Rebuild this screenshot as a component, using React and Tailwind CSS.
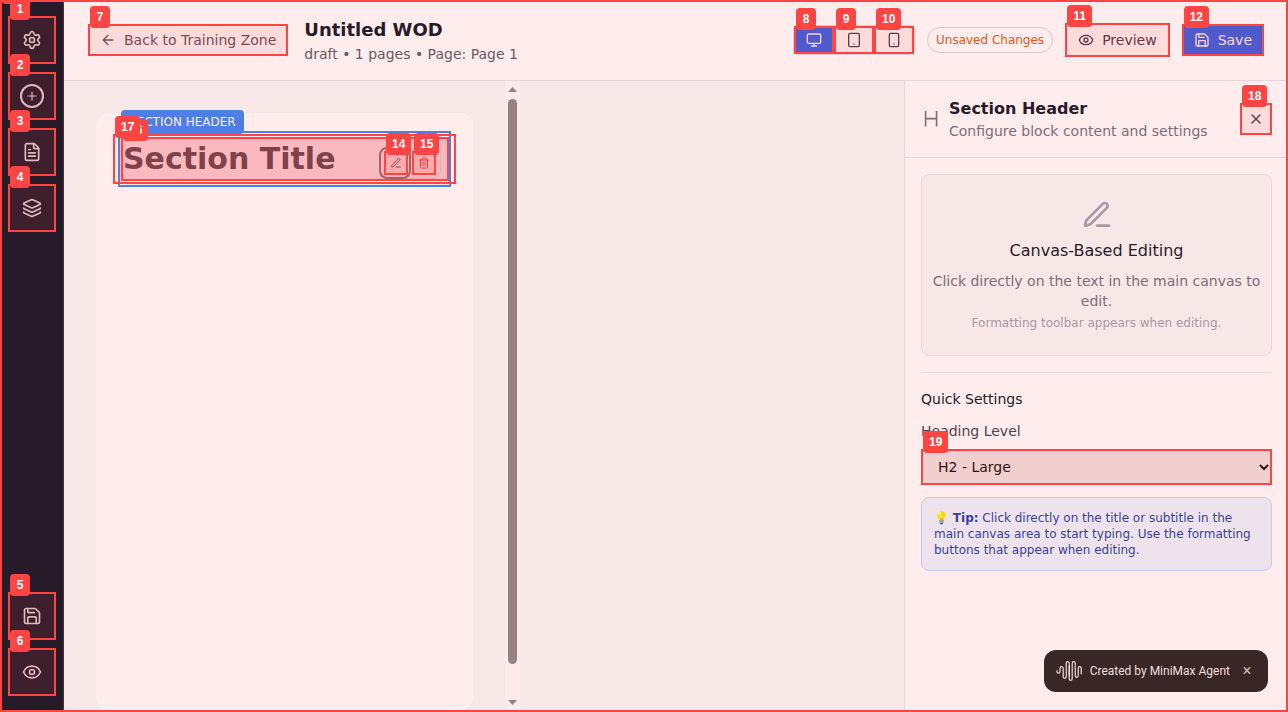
import React from "react";
import {
  ArrowLeft,
  Eye,
  FileText,
  Layers,
  Monitor,
  Save,
  Settings,
  Smartphone,
  Tablet,
  Trash2,
  X,
} from "lucide-react";

/* Numbered frame laid over an interactive element. */
function Marker({ n, place = "inset-0", tint = "bg-[#ff4444]/10" }) {
  return (
    <span className={`pointer-events-none absolute border-2 border-[#ff4444] ${place} ${tint}`}>
      <span className="absolute -top-5 left-0 flex h-[22px] min-w-5 items-center justify-center rounded bg-[#ff4444] px-1.5 font-['Liberation_Sans',sans-serif] text-xs leading-none font-bold text-white">
        {n}
      </span>
    </span>
  );
}

function AddIcon() {
  return (
    <svg width="24" height="24" viewBox="0 0 24 24" fill="none" stroke="currentColor">
      <circle cx="12" cy="12" r="11" strokeWidth="2" />
      <path d="M12 8v8M8 12h8" strokeWidth="1.2" strokeLinecap="round" />
    </svg>
  );
}

function EditIcon({ size, className }) {
  return (
    <svg width={size} height={size} viewBox="0 0 24 24" fill="none" stroke="currentColor" strokeWidth="2" strokeLinecap="round" strokeLinejoin="round" className={className}>
      <path d="M12 20h9" />
      <path d="M16.376 3.622a1 1 0 0 1 3.002 3.002L7.368 18.635a2 2 0 0 1-.855.506l-2.872.838a.5.5 0 0 1-.62-.62l.838-2.872a2 2 0 0 1 .506-.854z" />
    </svg>
  );
}

function HeadingIcon() {
  return (
    <svg width="20" height="20" viewBox="0 0 20 20" fill="none" stroke="currentColor" strokeWidth="1.6" className="shrink-0 text-[#806d78]">
      <path d="M4.6 2v15.5M15.6 2v15.5M4.6 9.6h11" />
    </svg>
  );
}

function WaveLogo() {
  return (
    <svg width="26" height="22" viewBox="0 0 26 22" fill="none" stroke="currentColor" strokeWidth="1.2" strokeLinecap="round" strokeLinejoin="round">
      <path d="M1 10.5v1.2a1.5 1.5 0 0 0 3 0V8.2a1.6 1.6 0 0 1 3.2 0v8.6a1.5 1.5 0 0 0 3 0V3.2a1.5 1.5 0 0 1 3 0v12.6" />
      <path d="M13.2 6v12.8a1.5 1.5 0 0 0 3 0V3.2a1.5 1.5 0 0 1 3 0v12.6a1.5 1.5 0 0 0 3 0V8.2a1.5 1.5 0 0 1 3 0v5.6" />
    </svg>
  );
}

function RailButton({ n, label, children }) {
  return (
    <button type="button" aria-label={label} className="relative flex size-12 items-center justify-center text-[#e0c5cf]">
      {children}
      <Marker n={n} />
    </button>
  );
}

function Rail() {
  return (
    <nav className="flex w-16 shrink-0 flex-col justify-between border-r border-[#44343f] bg-[#281b29] py-4 pl-2">
      <div className="flex flex-col gap-2">
        <RailButton n="1" label="Settings"><Settings size={20} /></RailButton>
        <RailButton n="2" label="Add block"><AddIcon /></RailButton>
        <RailButton n="3" label="Pages"><FileText size={20} /></RailButton>
        <RailButton n="4" label="Layers"><Layers size={20} /></RailButton>
      </div>
      <div className="flex flex-col gap-2">
        <RailButton n="5" label="Save"><Save size={20} /></RailButton>
        <RailButton n="6" label="Preview"><Eye size={20} /></RailButton>
      </div>
    </nav>
  );
}

function DeviceButton({ n, label, active, children }) {
  return (
    <button
      type="button"
      aria-label={label}
      className={`relative flex h-7 w-10 items-center justify-center ${active ? "bg-[#3b5edc] text-[#ffe0ea]" : "text-[#523a48]"}`}
    >
      {children}
      <Marker n={n} />
    </button>
  );
}

function TopBar() {
  return (
    <header className="flex items-center justify-between border-b border-[#e9d5db] px-6 py-4">
      <div className="flex items-center gap-4">
        <button type="button" className="relative flex h-8 items-center gap-2 px-3 text-sm text-[#694f5c]">
          <ArrowLeft size={16} />
          Back to Training Zone
          <Marker n="7" />
        </button>
        <div>
          <h1 className="text-lg leading-7 font-bold text-[#281b29]">Untitled WOD</h1>
          <p className="text-sm text-[#6b5a66]">draft • 1 pages • Page: Page 1</p>
        </div>
      </div>
      <div className="flex items-center gap-3">
        <div className="flex rounded-md border border-[#dcc8d0]">
          <DeviceButton n="8" label="Desktop" active><Monitor size={16} /></DeviceButton>
          <DeviceButton n="9" label="Tablet"><Tablet size={16} /></DeviceButton>
          <DeviceButton n="10" label="Phone"><Smartphone size={16} /></DeviceButton>
        </div>
        <span className="rounded-full border border-[#dac6ce] px-2 py-1 text-xs text-[#ec5718]">Unsaved Changes</span>
        <button type="button" className="relative flex h-[34px] items-center gap-2 px-[13px] text-sm text-[#523a48]">
          <Eye size={16} />
          Preview
          <Marker n="11" />
        </button>
        <button type="button" className="relative flex h-8 items-center gap-2 bg-[#3b5edc] px-3 text-sm text-[#ffe3ec]">
          <Save size={16} />
          Save
          <Marker n="12" />
        </button>
      </div>
    </header>
  );
}

function ScrollBar() {
  return (
    <div className="flex w-[15px] shrink-0 flex-col items-center bg-[#fcebea] pt-1.5 pb-[7px]">
      <svg width="9" height="5" viewBox="0 0 9 5" fill="#958282"><path d="M4.500 0l4.500 5H0z" /></svg>
      <div className="mt-[7px] mb-9 w-[9px] flex-1 rounded-full bg-[#958282]" />
      <svg width="9" height="5" viewBox="0 0 9 5" fill="#958282"><path d="M0 0h9L4.500 5z" /></svg>
    </div>
  );
}

function Canvas() {
  return (
    <main className="flex flex-1 bg-[#f8e7e7]">
      <div className="flex w-[456px]">
        <div className="flex flex-1 pt-8 pr-8 pb-0.5 pl-8">
          <div className="flex-1 rounded-xl bg-[#ffecec] px-6 pt-5">
            <div className="relative py-1 outline-2 outline-[#4f7ee5]">
              <span className="absolute bottom-full left-px -mb-px rounded bg-[#4f7ee5] px-2 py-1 text-xs whitespace-nowrap text-[#ffecf4]">
                SECTION HEADER
              </span>
              <h2 className="bg-[#f9b9bf] pl-[3px] text-3xl leading-[44px] font-bold text-[#80424a]">Section Title</h2>
              <Marker n="16" place="top-1 right-0 bottom-1 left-px" tint="bg-transparent" />
              <div className="absolute top-3.5 right-2 flex h-8 items-center gap-1 rounded-lg border border-[#f0a9b1] bg-[#ffb6b9] px-1">
                <span className="absolute -top-px -left-px size-8 rounded-lg border-2 border-[#a0626b]" />
                <button type="button" aria-label="Edit block" className="relative flex size-6 items-center justify-center text-[#8c4f58]">
                  <EditIcon size={12} />
                  <Marker n="14" />
                </button>
                <button type="button" aria-label="Delete block" className="relative flex size-6 items-center justify-center text-[#e83f45]">
                  <Trash2 size={12} />
                  <Marker n="15" />
                </button>
              </div>
              <Marker n="17" place="top-px -right-[7px] bottom-px -left-[7px]" tint="bg-transparent" />
            </div>
          </div>
        </div>
        <ScrollBar />
      </div>
    </main>
  );
}

function Inspector() {
  return (
    <aside className="w-96 shrink-0 border-l border-[#e9d5db]">
      <div className="flex items-center justify-between border-b border-[#e9d5db] p-4">
        <div className="flex items-center gap-2">
          <HeadingIcon />
          <div>
            <h2 className="text-base font-bold text-[#281b29]">Section Header</h2>
            <p className="text-sm text-[#806d78]">Configure block content and settings</p>
          </div>
        </div>
        <button type="button" aria-label="Close" className="relative flex size-8 items-center justify-center text-[#523a48]">
          <X size={16} />
          <Marker n="18" />
        </button>
      </div>
      <div className="p-4">
        <div className="rounded-lg border border-[#e9d5db] bg-[#f8e7e7] px-2 py-6 text-center">
          <EditIcon size={32} className="mx-auto text-[#a998a5]" />
          <h3 className="mt-2 text-base text-[#281b29]">Canvas-Based Editing</h3>
          <p className="mt-2 text-sm text-[#806d78]">Click directly on the text in the main canvas to edit.</p>
          <p className="mt-1 text-xs text-[#a998a5]">Formatting toolbar appears when editing.</p>
        </div>
        <div className="mt-4 border-t border-[#e9d5db] pt-4">
          <h3 className="text-sm text-[#281b29]">Quick Settings</h3>
          <label htmlFor="level" className="mt-3 block text-sm text-[#54424f]">Heading Level</label>
          <div className="relative mt-2">
            <select id="level" defaultValue="h2" className="block h-9 w-full bg-[#f1dfdf] px-[13px] text-sm text-[#1e0a10]">
              <option value="h1">H1 - Extra Large</option>
              <option value="h2">H2 - Large</option>
              <option value="h3">H3 - Medium</option>
            </select>
            <Marker n="19" />
          </div>
        </div>
        <p className="mt-3 rounded-lg border border-[#c4cbea] bg-[#eee3ec] p-3 text-xs text-[#3841a3]">
          💡 <strong>Tip:</strong> Click directly on the title or subtitle in the main canvas area to start typing. Use the formatting buttons that appear when editing.
        </p>
      </div>
    </aside>
  );
}

export default function App() {
  return (
    <div className="relative flex min-h-screen overflow-hidden bg-[#ffecec] font-['DejaVu_Sans',sans-serif]">
      <Rail />
      <div className="flex min-w-0 flex-1 flex-col">
        <TopBar />
        <div className="flex flex-1">
          <Canvas />
          <Inspector />
        </div>
      </div>
      <div className="absolute right-5 bottom-5 flex h-[42px] items-center rounded-xl bg-[#392727] px-3 font-[Roboto,sans-serif] text-xs text-[#f0dede]">
        <WaveLogo />
        <span className="ml-2">Created by MiniMax Agent</span>
        <button type="button" aria-label="Dismiss" className="ml-2 flex size-[18px] items-center justify-center text-base leading-none text-[#cbbaba]">×</button>
      </div>
      <Marker tint="bg-transparent" />
    </div>
  );
}
